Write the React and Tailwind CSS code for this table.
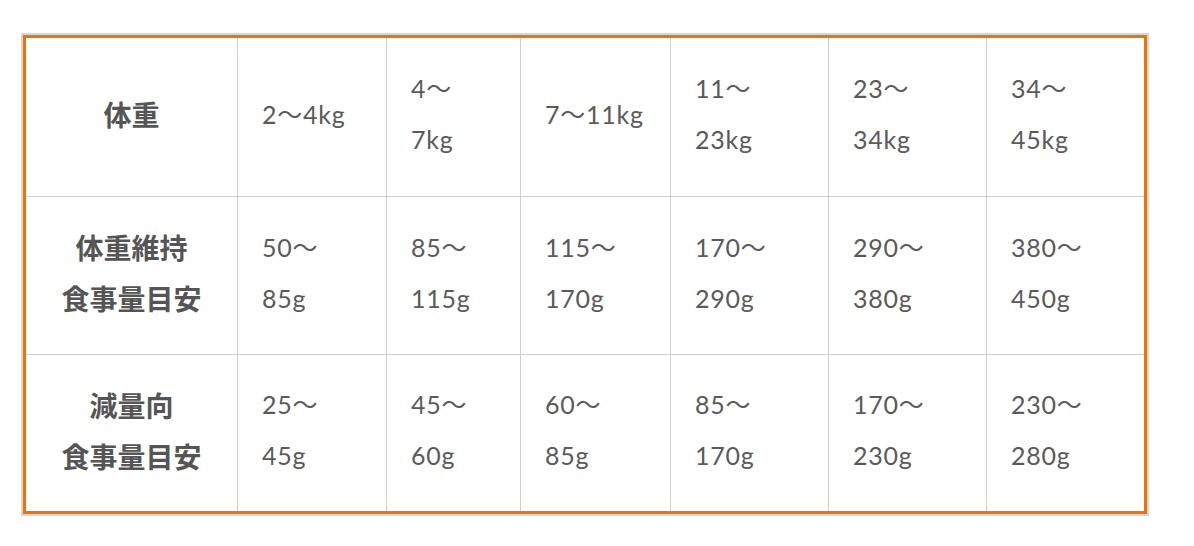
import React from 'react'

const rows = [
  {
    label: ['体重'],
    cells: [['2〜4kg'], ['4〜', '7kg'], ['7〜11kg'], ['11〜', '23kg'], ['23〜', '34kg'], ['34〜', '45kg']],
  },
  {
    label: ['体重維持', '食事量目安'],
    cells: [['50〜', '85g'], ['85〜', '115g'], ['115〜', '170g'], ['170〜', '290g'], ['290〜', '380g'], ['380〜', '450g']],
  },
  {
    label: ['減量向', '食事量目安'],
    cells: [['25〜', '45g'], ['45〜', '60g'], ['60〜', '85g'], ['85〜', '170g'], ['170〜', '230g'], ['230〜', '280g']],
  },
]

const rowHeights = ['h-[158px]', 'h-[157px]', 'h-[156px]']

const App = () => {
  return (
    <div className="min-h-[546px] w-[1194px] bg-white pt-[33px] pl-[21px]">
      <div className="w-[1128px] border-2 border-[#d6d6d6]">
        <div className="border-[3px] border-[#ef7300]">
          <div className="grid grid-cols-[211px_148px_133px_149px_157px_157px_157px] gap-px bg-[#cfcfcf]">
            {rows.map((row, i) => (
              <React.Fragment key={i}>
                <div
                  className={`${rowHeights[i]} flex flex-col items-center justify-center bg-white pb-[5px] text-[28px] font-bold leading-[51px] text-[#555555]`}
                  style={{ fontFamily: '"Noto Sans CJK JP", sans-serif' }}
                >
                  {row.label.map((l, j) => (
                    <span key={j}>{l}</span>
                  ))}
                </div>
                {row.cells.map((c, j) => (
                  <div
                    key={j}
                    className={`${rowHeights[i]} flex flex-col justify-center bg-white pb-[6px] pl-[24px] text-[25px] leading-[51px] tracking-[0.03em] text-[#5a5a5a]`}
                    style={{ fontFamily: 'Lato, "Noto Sans CJK JP", sans-serif' }}
                  >
                    {c.map((t, k) => (
                      <span key={k} className="whitespace-nowrap">{t}</span>
                    ))}
                  </div>
                ))}
              </React.Fragment>
            ))}
          </div>
        </div>
      </div>
    </div>
  )
}

export default App
